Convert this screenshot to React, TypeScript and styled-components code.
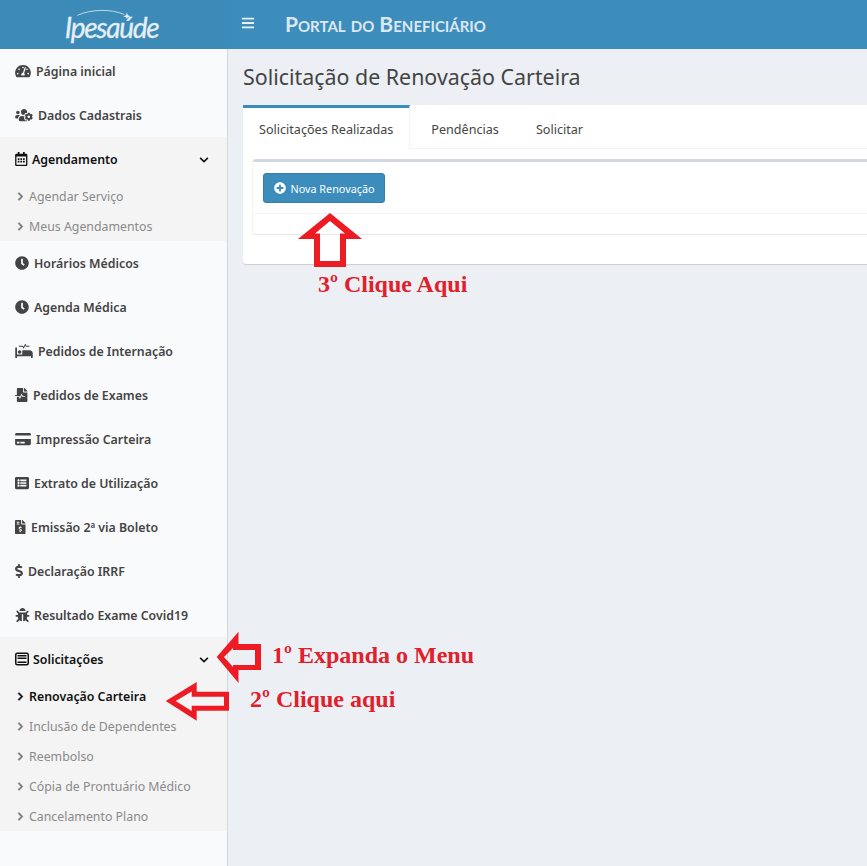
import styled, { createGlobalStyle } from "styled-components";
import type { ComponentType } from "react";
import {
  FaBars,
  FaBug,
  FaChevronDown,
  FaChevronRight,
  FaClock,
  FaCreditCard,
  FaDollarSign,
  FaFileInvoiceDollar,
  FaFileMedicalAlt,
  FaListAlt,
  FaPlusCircle,
  FaProcedures,
  FaRegCalendarAlt,
  FaTachometerAlt,
  FaUsersCog,
} from "react-icons/fa";

const GlobalStyle = createGlobalStyle`
  html, body {
    margin: 0;
    height: 100%;
    overflow: hidden;
  }
  body {
    font-family: "Noto Sans", "Open Sans", sans-serif;
    background: #ecf0f5;
  }
`;

// iconW = drawn width of the icon, textAt = x of the label
type Entry = { label: string; icon: ComponentType; iconW: number; textAt: number };
type Group = Entry & { subs: string[]; active?: string };

const FormIcon = () => (
  <svg viewBox="0 0 14 14" aria-hidden="true">
    <rect x="0.75" y="1.25" width="12.5" height="11.5" rx="1.5" fill="none" stroke="currentColor" strokeWidth="1.5" />
    <path d="M2.5 3h9v1.4h-9zM2.5 5.6h9V7h-9zM2.5 9.5h9v1.4h-9z" fill="currentColor" />
  </svg>
);

const topItems: Entry[] = [
  { label: "Página inicial", icon: FaTachometerAlt, iconW: 16, textAt: 36 },
  { label: "Dados Cadastrais", icon: FaUsersCog, iconW: 18, textAt: 38 },
];

const middleItems: Entry[] = [
  { label: "Horários Médicos", icon: FaClock, iconW: 14, textAt: 34 },
  { label: "Agenda Médica", icon: FaClock, iconW: 14, textAt: 34 },
  { label: "Pedidos de Internação", icon: FaProcedures, iconW: 18, textAt: 38 },
  { label: "Pedidos de Exames", icon: FaFileMedicalAlt, iconW: 12.5, textAt: 33 },
  { label: "Impressão Carteira", icon: FaCreditCard, iconW: 16, textAt: 36 },
  { label: "Extrato de Utilização", icon: FaListAlt, iconW: 14, textAt: 34 },
  { label: "Emissão 2ª via Boleto", icon: FaFileInvoiceDollar, iconW: 10.5, textAt: 31 },
  { label: "Declaração IRRF", icon: FaDollarSign, iconW: 8, textAt: 28 },
  { label: "Resultado Exame Covid19", icon: FaBug, iconW: 15, textAt: 34 },
];

const agendamento: Group = {
  label: "Agendamento",
  icon: FaRegCalendarAlt,
  iconW: 12.5,
  textAt: 32,
  subs: ["Agendar Serviço", "Meus Agendamentos"],
};

const solicitacoes: Group = {
  label: "Solicitações",
  icon: FormIcon,
  iconW: 14,
  textAt: 33,
  subs: [
    "Renovação Carteira",
    "Inclusão de Dependentes",
    "Reembolso",
    "Cópia de Prontuário Médico",
    "Cancelamento Plano",
  ],
  active: "Renovação Carteira",
};

const MenuItem = ({ label, icon: Icon, iconW, textAt }: Entry) => (
  <Item $textAt={textAt}>
    <IconSlot $w={iconW}>
      <Icon />
    </IconSlot>
    <span>{label}</span>
  </Item>
);

const MenuGroup = ({ label, icon: Icon, iconW, textAt, subs, active }: Group) => (
  <GroupBox>
    <GroupHead $textAt={textAt}>
      <IconSlot $w={iconW}>
        <Icon />
      </IconSlot>
      <span>{label}</span>
      <Caret>
        <FaChevronDown size={10} />
      </Caret>
    </GroupHead>
    {subs.map((s) => (
      <SubItem key={s} $active={s === active}>
        <FaChevronRight size={9} />
        <span>{s}</span>
      </SubItem>
    ))}
  </GroupBox>
);

const App = () => {
  return (
    <Page>
      <GlobalStyle />
      <Header>
        <Brand>
          <LogoArc viewBox="0 0 60 12" aria-hidden="true">
            <path d="M1 8 C 16 1, 38 1, 52 7" fill="none" stroke="#dbe8f1" strokeWidth="0.9" />
            <path d="M55 5 L56 8 L59 9 L56 10 L55 12 L54 10 L51 9 L54 8 Z" fill="#e6eff5" />
          </LogoArc>
          <LogoText>Ipesaúde</LogoText>
        </Brand>
        <Bar>
          <FaBars size={14} />
          <PortalTitle>Portal do Beneficiário</PortalTitle>
        </Bar>
      </Header>
      <Body>
        <Sidebar>
          {topItems.map((i) => (
            <MenuItem key={i.label} {...i} />
          ))}
          <MenuGroup {...agendamento} />
          {middleItems.map((i) => (
            <MenuItem key={i.label} {...i} />
          ))}
          <MenuGroup {...solicitacoes} />
        </Sidebar>
        <Content>
          <PageTitle>Solicitação de Renovação Carteira</PageTitle>
          <Card>
            <Tabs>
              <Tab $active>Solicitações Realizadas</Tab>
              <Tab>Pendências</Tab>
              <Tab>Solicitar</Tab>
            </Tabs>
            <Panel>
              <PanelHead>
                <Button>
                  <FaPlusCircle size={12} />
                  Nova Renovação
                </Button>
              </PanelHead>
            </Panel>
          </Card>
        </Content>
      </Body>

      <Arrow $x={298} $y={213} width={64} height={54} viewBox="298 213 64 54">
        <path
          fillRule="evenodd"
          d="M330 213 L362 239 H346 V267 H314 V239 H298 Z M330 221 L315 233.5 H320 V261 H340 V233.5 H345 Z"
        />
      </Arrow>
      <Arrow $x={216} $y={631} width={46} height={53} viewBox="216 631 46 53">
        <path
          fillRule="evenodd"
          d="M216.7 657 L238.5 631.7 V644 H261 V670 H238.5 V683 Z M224 657 L233 648 V650 H255 V665 H233 V667 Z"
        />
      </Arrow>
      <Arrow $x={165} $y={681} width={65} height={40} viewBox="165 681 65 40">
        <path
          fillRule="evenodd"
          d="M165.7 701 L196.7 682 V691.7 H229 V710.7 H196.7 V720.7 Z M175.7 701 L191.7 691.5 V696.7 H224 V705.7 H191.7 V711 Z"
        />
      </Arrow>

      <Note $x={318} $y={271}>3º Clique Aqui</Note>
      <Note $x={272} $y={642}>1º Expanda o Menu</Note>
      <Note $x={250} $y={686}>2º Clique aqui</Note>
    </Page>
  );
};

export default App;

const Page = styled.div`
  position: relative;
  width: 867px;
  height: 866px;
  overflow: hidden;
  display: flex;
  flex-direction: column;
`;

const Header = styled.header`
  height: 49px;
  flex: none;
  display: flex;
  background: #3c8dbc;
  color: #fff;
`;

const Brand = styled.div`
  position: relative;
  width: 226px;
  flex: none;
  background: #3b8ab8;
  display: flex;
  align-items: center;
  justify-content: center;
`;

const LogoArc = styled.svg`
  position: absolute;
  left: 76px;
  top: 8px;
  width: 56px;
  height: 11px;
`;

const LogoText = styled.div`
  font-family: "Lato", sans-serif;
  font-style: italic;
  font-weight: 400;
  font-size: 28px;
  letter-spacing: -1.3px;
  color: #e6eff5;
  margin-top: 5px;
  margin-left: -3px;
  -webkit-text-stroke: 0.3px #e6eff5;
`;

const Bar = styled.div`
  flex: 1;
  display: flex;
  align-items: center;
  padding-left: 15px;
  padding-bottom: 3px;
  color: #e6eff5;
`;

const PortalTitle = styled.div`
  margin-left: 30px;
  font-family: "Lato", sans-serif;
  font-size: 21px;
  font-weight: 700;
  font-variant: small-caps;
  color: #dce8f0;
`;

const Body = styled.div`
  flex: 1;
  display: flex;
  min-height: 0;
`;

const Sidebar = styled.nav`
  width: 227px;
  flex: none;
  background: #f9fafc;
  border-right: 1px solid #d2d6de;
`;

const Item = styled.div<{ $textAt: number }>`
  height: 44px;
  display: grid;
  grid-template-columns: ${(p) => p.$textAt - 15}px 1fr auto;
  align-items: center;
  padding: 1px 18px 0 15px;
  box-sizing: border-box;
  font-size: 12.35px;
  font-weight: 600;
  color: #444;
`;

const IconSlot = styled.span<{ $w: number }>`
  display: flex;
  justify-content: flex-start;
  margin-top: -2px;
  svg {
    flex: none;
    width: ${(p) => p.$w}px;
    height: 14px;
  }
`;

const GroupBox = styled.div`
  background: #f4f4f5;
`;

const GroupHead = styled(Item)`
  color: #111;
`;

const Caret = styled.span`
  display: flex;
`;

const SubItem = styled.div<{ $active?: boolean }>`
  height: 30px;
  display: flex;
  align-items: center;
  gap: 4px;
  padding-left: 16px;
  box-sizing: border-box;
  font-size: 12.35px;
  font-weight: ${(p) => (p.$active ? 600 : 400)};
  color: ${(p) => (p.$active ? "#111" : "#8a8a8a")};
  svg {
    color: ${(p) => (p.$active ? "#111" : "#777")};
    stroke: currentColor;
    stroke-width: 30;
  }
`;

const Content = styled.main`
  flex: 1;
  min-width: 0;
  padding-left: 15px;
`;

const PageTitle = styled.h1`
  margin: 12px 0 12px;
  font-size: 21.4px;
  line-height: 32px;
  font-weight: 400;
  color: #444;
  white-space: nowrap;
`;

const Card = styled.section`
  height: 159px;
  width: 680px;
  box-sizing: border-box;
  background: #fff;
  border-radius: 3px;
  box-shadow: 0 1px 1px rgba(0, 0, 0, 0.15);
`;

const Tabs = styled.div`
  display: flex;
  height: 44px;
  box-sizing: border-box;
  border-bottom: 1px solid #f4f4f4;
`;

const Tab = styled.div<{ $active?: boolean }>`
  height: 44px;
  box-sizing: border-box;
  display: flex;
  align-items: center;
  padding: 1px 16px 0;
  margin-right: ${(p) => (p.$active ? "5px" : "4px")};
  font-size: 12.6px;
  color: #444;
  white-space: nowrap;
  border-top: 3px solid ${(p) => (p.$active ? "#3c8dbc" : "transparent")};
  border-right: 1px solid ${(p) => (p.$active ? "#f4f4f4" : "transparent")};
  background: ${(p) => (p.$active ? "#fff" : "transparent")};
`;

const Panel = styled.div`
  margin: 10px 0 0 10px;
  height: 76px;
  box-sizing: border-box;
  border-top: 3px solid #d2d6de;
  border-bottom: 1px solid #e6e6e6;
  border-radius: 3px;
  box-shadow: -1px 0 0 #f4f4f4;
`;

const PanelHead = styled.div`
  height: 52px;
  box-sizing: border-box;
  padding: 11px 10px 0;
  border-bottom: 1px solid #f4f4f4;
`;

const Button = styled.div`
  width: 122px;
  height: 30px;
  box-sizing: border-box;
  display: flex;
  align-items: center;
  justify-content: center;
  gap: 5px;
  border-radius: 3px;
  border: 1px solid #367fa9;
  background: #3c8dbc;
  color: #fff;
  font-size: 10.8px;
  white-space: nowrap;
`;

const Arrow = styled.svg<{ $x: number; $y: number }>`
  position: absolute;
  left: ${(p) => p.$x}px;
  top: ${(p) => p.$y}px;
  fill: #ed1c24;
`;

const Note = styled.div<{ $x: number; $y: number }>`
  position: absolute;
  left: ${(p) => p.$x}px;
  top: ${(p) => p.$y}px;
  font-family: "Liberation Serif", serif;
  font-weight: 700;
  font-size: 24px;
  line-height: 27px;
  color: #e0202a;
  white-space: nowrap;
`;
